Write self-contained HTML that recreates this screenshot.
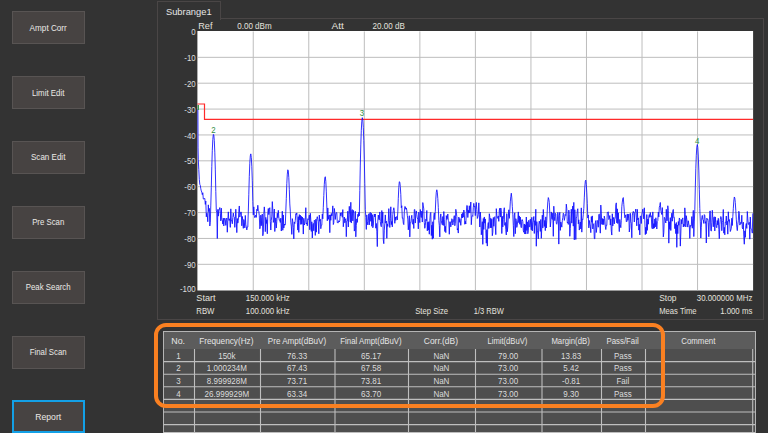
<!DOCTYPE html>
<html><head><meta charset="utf-8"><style>
html,body{margin:0;padding:0;}
body{width:768px;height:433px;overflow:hidden;background:#333333;position:relative;font-family:"Liberation Sans",sans-serif;}
.btn{position:absolute;left:12px;width:71px;height:31px;border:1px solid #585453;background:#474342;}
.btn.sel{border:2px solid #13a0e6;width:69px;height:29px;}
svg{position:absolute;left:0;top:0;}
text{font-family:"Liberation Sans",sans-serif;}
</style></head><body>
<div class="btn" style="top:11px"></div><div class="btn" style="top:76px"></div><div class="btn" style="top:141px"></div><div class="btn" style="top:206px"></div><div class="btn" style="top:271px"></div><div class="btn" style="top:336px"></div><div class="btn sel" style="top:400px"></div>
<div style="position:absolute;left:157px;top:18px;width:605px;height:300px;border:1px solid #4a4646;"></div>
<div style="position:absolute;left:157px;top:1px;width:62px;height:18px;border:1px solid #4a4646;border-bottom:none;background:#333333;"></div>
<div style="position:absolute;left:163px;top:331px;width:591px;height:120px;border:1px solid #b4b4b4;background:#4e4e4e;"></div>
<div style="position:absolute;left:164px;top:332px;width:591px;height:17px;background:#5c5c5c;"></div>
<svg width="768" height="433">
<rect x="197.4" y="31" width="555.7" height="259.5" fill="#ffffff"/>
<g stroke="#bdbdbd" stroke-width="1.0"><line x1="253.24" y1="31.45" x2="253.24" y2="290.2"/><line x1="308.78" y1="31.45" x2="308.78" y2="290.2"/><line x1="364.32" y1="31.45" x2="364.32" y2="290.2"/><line x1="419.86" y1="31.45" x2="419.86" y2="290.2"/><line x1="475.40" y1="31.45" x2="475.40" y2="290.2"/><line x1="530.94" y1="31.45" x2="530.94" y2="290.2"/><line x1="586.48" y1="31.45" x2="586.48" y2="290.2"/><line x1="642.02" y1="31.45" x2="642.02" y2="290.2"/><line x1="697.56" y1="31.45" x2="697.56" y2="290.2"/><line x1="197.7" y1="57.33" x2="753.0999999999999" y2="57.33"/><line x1="197.7" y1="83.20" x2="753.0999999999999" y2="83.20"/><line x1="197.7" y1="109.08" x2="753.0999999999999" y2="109.08"/><line x1="197.7" y1="134.95" x2="753.0999999999999" y2="134.95"/><line x1="197.7" y1="160.82" x2="753.0999999999999" y2="160.82"/><line x1="197.7" y1="186.70" x2="753.0999999999999" y2="186.70"/><line x1="197.7" y1="212.57" x2="753.0999999999999" y2="212.57"/><line x1="197.7" y1="238.45" x2="753.0999999999999" y2="238.45"/><line x1="197.7" y1="264.32" x2="753.0999999999999" y2="264.32"/></g>
<polyline fill="none" stroke="#ff2a2a" stroke-width="1.2" points="197.4,104 204.5,104 204.5,119.4 753.1,119.4"/>
<polyline fill="none" stroke="#0c0cff" stroke-width="0.85" stroke-linejoin="round" points="197.90,109.08 198.05,147.89 198.30,159.84 198.80,169.70 199.30,179.37 199.80,184.34 200.30,185.32 200.80,188.79 201.30,190.92 201.80,192.14 202.30,194.66 202.80,192.78 203.30,199.00 203.80,199.12 204.30,198.55 204.80,198.45 205.30,204.40 205.80,201.08 206.30,216.81 206.80,213.14 207.30,215.43 207.80,221.74 208.30,204.85 208.80,211.52 209.30,208.39 209.80,226.01 210.30,222.36 210.80,205.12 211.30,187.33 211.80,166.50 212.30,150.26 212.80,139.60 213.30,134.42 213.80,134.81 214.30,140.76 214.80,152.22 215.30,169.14 215.80,191.55 216.30,211.03 216.80,212.29 217.30,238.51 217.80,209.42 218.30,216.14 218.80,209.54 219.30,209.55 219.80,207.57 220.30,213.28 220.80,220.92 221.30,208.15 221.80,219.33 222.30,220.24 222.80,224.08 223.30,218.13 223.80,225.95 224.30,220.00 224.80,218.07 225.30,219.93 225.80,225.39 226.30,219.19 226.80,218.10 227.30,232.24 227.80,220.59 228.30,211.86 228.80,220.34 229.30,220.33 229.80,218.73 230.30,227.38 230.80,208.85 231.30,220.99 231.80,220.60 232.30,223.78 232.80,217.43 233.30,213.10 233.80,216.71 234.30,217.20 234.80,227.36 235.30,218.84 235.80,209.24 236.30,220.89 236.80,232.61 237.30,218.51 237.80,223.11 238.30,220.69 238.80,211.40 239.30,205.97 239.80,217.11 240.30,214.14 240.80,212.02 241.30,212.11 241.80,225.80 242.30,216.42 242.80,220.33 243.30,228.34 243.80,219.53 244.30,222.15 244.80,227.92 245.30,215.44 245.80,224.80 246.30,226.81 246.80,229.95 247.30,227.03 247.80,226.99 248.30,211.92 248.80,194.28 249.30,176.34 249.80,163.25 250.30,155.85 250.80,153.87 251.30,157.45 251.80,166.33 252.30,180.85 252.80,201.35 253.30,214.84 253.80,206.87 254.30,215.46 254.80,217.70 255.30,216.88 255.80,215.06 256.30,217.37 256.80,209.32 257.30,210.82 257.80,205.27 258.30,210.27 258.80,211.50 259.30,215.75 259.80,228.81 260.30,226.69 260.80,215.12 261.30,225.69 261.80,217.35 262.30,214.09 262.80,235.77 263.30,232.83 263.80,214.24 264.30,206.89 264.80,213.40 265.30,231.66 265.80,217.38 266.30,223.52 266.80,219.71 267.30,233.78 267.80,212.77 268.30,208.48 268.80,214.61 269.30,209.57 269.80,207.70 270.30,221.52 270.80,230.03 271.30,220.28 271.80,216.11 272.30,201.62 272.80,209.99 273.30,222.42 273.80,219.88 274.30,209.07 274.80,231.51 275.30,223.15 275.80,217.87 276.30,228.04 276.80,221.31 277.30,213.20 277.80,217.71 278.30,210.32 278.80,216.98 279.30,220.28 279.80,219.88 280.30,222.48 280.80,218.17 281.30,231.03 281.80,222.87 282.30,211.21 282.80,230.28 283.30,214.94 283.80,228.06 284.30,224.00 284.80,225.13 285.30,224.89 285.80,211.25 286.30,198.50 286.80,183.69 287.30,174.13 287.80,169.79 288.30,170.98 288.80,177.65 289.30,189.31 289.80,203.93 290.30,211.15 290.80,222.14 291.30,226.12 291.80,234.38 292.30,218.64 292.80,221.61 293.30,227.40 293.80,238.88 294.30,222.13 294.80,223.60 295.30,220.37 295.80,213.70 296.30,214.57 296.80,212.95 297.30,222.27 297.80,230.10 298.30,216.63 298.80,232.42 299.30,214.59 299.80,219.86 300.30,215.15 300.80,224.43 301.30,216.28 301.80,224.20 302.30,216.99 302.80,220.16 303.30,234.05 303.80,218.32 304.30,225.01 304.80,223.41 305.30,219.23 305.80,207.69 306.30,223.97 306.80,222.93 307.30,225.75 307.80,218.74 308.30,219.55 308.80,218.92 309.30,215.12 309.80,229.76 310.30,213.27 310.80,219.88 311.30,231.40 311.80,221.79 312.30,237.98 312.80,224.77 313.30,223.41 313.80,230.78 314.30,220.24 314.80,221.29 315.30,235.40 315.80,219.29 316.30,232.16 316.80,218.60 317.30,216.69 317.80,219.46 318.30,221.68 318.80,233.79 319.30,215.06 319.80,221.22 320.30,219.27 320.80,228.73 321.30,225.17 321.80,225.16 322.30,214.12 322.80,218.85 323.30,207.25 323.80,195.44 324.30,184.26 324.80,177.98 325.30,176.74 325.80,181.38 326.30,191.15 326.80,204.97 327.30,220.81 327.80,207.94 328.30,219.35 328.80,215.91 329.30,214.95 329.80,232.68 330.30,214.90 330.80,220.31 331.30,213.41 331.80,215.98 332.30,213.70 332.80,205.87 333.30,224.55 333.80,222.71 334.30,208.44 334.80,212.38 335.30,219.46 335.80,213.89 336.30,212.66 336.80,212.56 337.30,222.83 337.80,222.54 338.30,222.77 338.80,220.63 339.30,221.94 339.80,220.45 340.30,212.79 340.80,215.84 341.30,213.31 341.80,212.54 342.30,217.25 342.80,209.60 343.30,226.78 343.80,220.98 344.30,217.01 344.80,222.80 345.30,220.39 345.80,218.63 346.30,236.70 346.80,221.06 347.30,220.99 347.80,211.18 348.30,226.99 348.80,215.20 349.30,206.33 349.80,214.70 350.30,221.93 350.80,202.27 351.30,223.04 351.80,210.92 352.30,209.60 352.80,220.89 353.30,210.33 353.80,213.28 354.30,231.10 354.80,228.91 355.30,211.32 355.80,236.83 356.30,225.35 356.80,218.86 357.30,222.40 357.80,214.34 358.30,216.66 358.80,212.25 359.30,215.92 359.80,190.45 360.30,165.04 360.80,144.89 361.30,130.26 361.80,121.18 362.30,117.66 362.80,119.70 363.30,127.31 363.80,140.46 364.30,159.13 364.80,183.27 365.30,209.24 365.80,217.46 366.30,229.43 366.80,214.90 367.30,221.47 367.80,224.92 368.30,220.58 368.80,213.78 369.30,224.85 369.80,213.22 370.30,212.36 370.80,221.34 371.30,213.17 371.80,226.29 372.30,214.70 372.80,227.80 373.30,225.57 373.80,217.14 374.30,214.01 374.80,216.91 375.30,213.98 375.80,228.19 376.30,223.46 376.80,231.18 377.30,246.59 377.80,221.20 378.30,215.02 378.80,219.23 379.30,219.85 379.80,211.98 380.30,221.53 380.80,225.24 381.30,226.74 381.80,210.53 382.30,223.19 382.80,212.10 383.30,239.97 383.80,243.68 384.30,230.20 384.80,223.24 385.30,214.90 385.80,223.14 386.30,221.02 386.80,238.33 387.30,223.87 387.80,226.44 388.30,221.01 388.80,208.64 389.30,220.56 389.80,227.47 390.30,218.37 390.80,206.80 391.30,224.62 391.80,221.39 392.30,226.87 392.80,214.53 393.30,210.36 393.80,207.76 394.30,210.43 394.80,223.32 395.30,216.95 395.80,220.35 396.30,216.79 396.80,216.68 397.30,219.87 397.80,211.88 398.30,198.34 398.80,187.28 399.30,181.67 399.80,182.14 400.30,186.41 400.80,194.61 401.30,207.75 401.80,205.75 402.30,218.28 402.80,217.79 403.30,223.22 403.80,224.60 404.30,212.18 404.80,206.50 405.30,206.71 405.80,209.23 406.30,207.93 406.80,210.35 407.30,215.35 407.80,219.06 408.30,229.83 408.80,223.95 409.30,215.73 409.80,236.91 410.30,222.54 410.80,222.49 411.30,218.28 411.80,215.25 412.30,223.22 412.80,224.31 413.30,219.26 413.80,228.48 414.30,209.70 414.80,209.44 415.30,223.06 415.80,213.80 416.30,210.93 416.80,214.68 417.30,217.99 417.80,219.18 418.30,228.89 418.80,212.12 419.30,219.89 419.80,222.64 420.30,209.51 420.80,215.46 421.30,217.50 421.80,211.08 422.30,222.04 422.80,202.57 423.30,205.96 423.80,208.90 424.30,222.55 424.80,228.29 425.30,225.52 425.80,219.24 426.30,220.69 426.80,210.49 427.30,230.84 427.80,222.21 428.30,230.07 428.80,221.71 429.30,234.21 429.80,220.61 430.30,213.65 430.80,212.40 431.30,235.57 431.80,225.22 432.30,239.18 432.80,221.73 433.30,238.30 433.80,215.93 434.30,212.96 434.80,219.58 435.30,211.35 435.80,199.18 436.30,192.19 436.80,189.78 437.30,192.09 437.80,198.59 438.30,207.42 438.80,220.47 439.30,225.59 439.80,236.89 440.30,217.97 440.80,213.93 441.30,220.90 441.80,223.46 442.30,224.79 442.80,216.53 443.30,225.48 443.80,211.54 444.30,219.84 444.80,231.50 445.30,226.37 445.80,232.62 446.30,215.60 446.80,219.47 447.30,218.81 447.80,214.05 448.30,220.62 448.80,221.04 449.30,234.28 449.80,222.14 450.30,221.79 450.80,226.86 451.30,223.40 451.80,218.72 452.30,219.58 452.80,225.02 453.30,222.67 453.80,218.44 454.30,215.65 454.80,225.77 455.30,223.37 455.80,209.30 456.30,212.15 456.80,216.55 457.30,230.00 457.80,228.52 458.30,233.07 458.80,217.06 459.30,222.33 459.80,218.53 460.30,220.98 460.80,225.33 461.30,218.59 461.80,213.91 462.30,218.04 462.80,212.63 463.30,217.23 463.80,210.00 464.30,212.50 464.80,224.28 465.30,221.31 465.80,224.00 466.30,212.59 466.80,205.45 467.30,205.69 467.80,217.51 468.30,210.21 468.80,213.14 469.30,205.76 469.80,212.94 470.30,209.92 470.80,202.03 471.30,224.71 471.80,216.71 472.30,215.62 472.80,216.42 473.30,207.51 473.80,203.34 474.30,207.09 474.80,206.40 475.30,215.61 475.80,207.01 476.30,202.45 476.80,209.64 477.30,218.47 477.80,217.04 478.30,214.30 478.80,202.87 479.30,214.34 479.80,227.03 480.30,212.01 480.80,219.06 481.30,234.79 481.80,229.58 482.30,221.68 482.80,244.34 483.30,218.47 483.80,229.45 484.30,216.96 484.80,223.15 485.30,218.93 485.80,230.68 486.30,243.18 486.80,229.67 487.30,246.08 487.80,225.42 488.30,222.52 488.80,228.58 489.30,213.73 489.80,216.96 490.30,227.86 490.80,218.21 491.30,227.80 491.80,219.21 492.30,235.71 492.80,232.42 493.30,217.49 493.80,226.26 494.30,217.46 494.80,216.63 495.30,225.98 495.80,234.66 496.30,208.65 496.80,215.21 497.30,218.30 497.80,217.84 498.30,215.95 498.80,221.37 499.30,210.18 499.80,208.21 500.30,217.09 500.80,207.99 501.30,210.75 501.80,233.52 502.30,216.28 502.80,226.93 503.30,219.71 503.80,211.29 504.30,207.75 504.80,225.33 505.30,222.48 505.80,229.64 506.30,234.94 506.80,213.60 507.30,231.77 507.80,226.95 508.30,217.15 508.80,209.81 509.30,218.38 509.80,211.27 510.30,201.89 510.80,196.64 511.30,193.20 511.80,197.90 512.30,206.43 512.80,214.22 513.30,225.44 513.80,236.57 514.30,215.07 514.80,212.73 515.30,233.71 515.80,218.64 516.30,220.38 516.80,227.42 517.30,224.96 517.80,219.94 518.30,211.92 518.80,222.65 519.30,215.91 519.80,224.29 520.30,217.07 520.80,225.89 521.30,227.73 521.80,219.83 522.30,219.63 522.80,221.56 523.30,230.52 523.80,232.29 524.30,223.98 524.80,234.02 525.30,224.75 525.80,234.04 526.30,217.00 526.80,230.50 527.30,221.82 527.80,233.77 528.30,230.86 528.80,220.26 529.30,226.57 529.80,226.99 530.30,219.18 530.80,225.02 531.30,229.82 531.80,217.33 532.30,230.97 532.80,222.57 533.30,220.71 533.80,216.51 534.30,233.48 534.80,220.68 535.30,225.39 535.80,209.25 536.30,246.24 536.80,221.61 537.30,230.12 537.80,233.01 538.30,238.75 538.80,224.04 539.30,221.11 539.80,224.08 540.30,231.42 540.80,219.51 541.30,238.36 541.80,227.77 542.30,215.16 542.80,228.06 543.30,209.48 543.80,217.60 544.30,226.46 544.80,220.46 545.30,230.63 545.80,216.88 546.30,228.00 546.80,220.42 547.30,209.94 547.80,201.84 548.30,197.58 548.80,199.09 549.30,202.71 549.80,213.87 550.30,227.00 550.80,221.77 551.30,211.93 551.80,218.61 552.30,219.44 552.80,213.10 553.30,236.32 553.80,206.21 554.30,216.38 554.80,220.66 555.30,213.26 555.80,214.25 556.30,223.27 556.80,224.24 557.30,221.63 557.80,212.40 558.30,216.92 558.80,244.10 559.30,215.64 559.80,212.33 560.30,230.40 560.80,222.00 561.30,224.13 561.80,227.16 562.30,220.79 562.80,217.55 563.30,213.21 563.80,214.34 564.30,220.42 564.80,217.78 565.30,214.57 565.80,215.44 566.30,204.15 566.80,208.80 567.30,222.93 567.80,222.20 568.30,224.43 568.80,210.13 569.30,214.67 569.80,236.28 570.30,228.34 570.80,220.20 571.30,209.23 571.80,223.12 572.30,211.87 572.80,205.98 573.30,226.13 573.80,202.38 574.30,239.83 574.80,209.71 575.30,219.08 575.80,239.51 576.30,218.13 576.80,216.24 577.30,210.53 577.80,208.74 578.30,223.83 578.80,219.80 579.30,230.07 579.80,225.34 580.30,221.98 580.80,228.96 581.30,207.87 581.80,232.15 582.30,218.92 582.80,219.48 583.30,214.32 583.80,208.54 584.30,197.85 584.80,187.06 585.30,181.29 585.80,180.16 586.30,184.48 586.80,192.90 587.30,203.26 587.80,218.06 588.30,214.93 588.80,227.90 589.30,220.45 589.80,224.03 590.30,226.21 590.80,232.67 591.30,216.65 591.80,222.21 592.30,215.88 592.80,228.95 593.30,224.23 593.80,223.66 594.30,238.50 594.80,238.94 595.30,222.96 595.80,220.57 596.30,232.50 596.80,227.71 597.30,220.41 597.80,221.33 598.30,227.23 598.80,214.46 599.30,214.03 599.80,221.86 600.30,233.15 600.80,205.07 601.30,213.12 601.80,224.34 602.30,218.44 602.80,224.65 603.30,219.07 603.80,224.61 604.30,216.13 604.80,218.61 605.30,226.14 605.80,229.54 606.30,225.05 606.80,225.41 607.30,212.42 607.80,212.45 608.30,211.80 608.80,219.52 609.30,218.54 609.80,215.53 610.30,225.07 610.80,218.89 611.30,231.16 611.80,235.06 612.30,213.81 612.80,225.93 613.30,219.40 613.80,217.31 614.30,223.86 614.80,219.06 615.30,217.89 615.80,204.96 616.30,202.86 616.80,222.88 617.30,208.84 617.80,223.57 618.30,212.82 618.80,223.83 619.30,231.60 619.80,219.45 620.30,224.61 620.80,227.70 621.30,220.38 621.80,206.73 622.30,202.12 622.80,198.44 623.30,197.58 623.80,204.50 624.30,211.45 624.80,217.74 625.30,216.84 625.80,214.84 626.30,221.51 626.80,222.00 627.30,213.94 627.80,220.36 628.30,218.40 628.80,214.08 629.30,231.94 629.80,227.81 630.30,213.25 630.80,221.78 631.30,223.31 631.80,237.78 632.30,215.05 632.80,212.81 633.30,211.40 633.80,213.36 634.30,221.98 634.80,212.41 635.30,211.81 635.80,209.04 636.30,217.85 636.80,225.86 637.30,209.33 637.80,219.91 638.30,217.92 638.80,230.15 639.30,224.35 639.80,234.90 640.30,216.19 640.80,216.05 641.30,223.54 641.80,214.79 642.30,212.00 642.80,209.18 643.30,213.76 643.80,218.93 644.30,207.80 644.80,220.80 645.30,234.61 645.80,227.27 646.30,233.70 646.80,214.56 647.30,230.36 647.80,219.07 648.30,224.21 648.80,216.28 649.30,214.50 649.80,217.41 650.30,212.45 650.80,216.67 651.30,215.75 651.80,227.48 652.30,228.79 652.80,211.92 653.30,228.59 653.80,223.63 654.30,228.14 654.80,218.94 655.30,226.91 655.80,217.77 656.30,220.53 656.80,229.01 657.30,221.53 657.80,220.55 658.30,212.11 658.80,216.90 659.30,207.19 659.80,205.44 660.30,202.47 660.80,210.23 661.30,212.69 661.80,214.56 662.30,207.59 662.80,217.05 663.30,236.89 663.80,232.66 664.30,217.32 664.80,217.92 665.30,220.33 665.80,223.01 666.30,209.32 666.80,220.93 667.30,220.38 667.80,205.75 668.30,210.42 668.80,243.15 669.30,221.78 669.80,229.30 670.30,217.65 670.80,230.53 671.30,218.65 671.80,213.17 672.30,221.19 672.80,211.00 673.30,209.45 673.80,217.86 674.30,217.42 674.80,228.64 675.30,223.87 675.80,233.65 676.30,222.51 676.80,247.33 677.30,224.94 677.80,233.64 678.30,221.52 678.80,225.24 679.30,217.98 679.80,219.04 680.30,246.11 680.80,233.99 681.30,219.52 681.80,223.88 682.30,219.54 682.80,217.88 683.30,226.96 683.80,224.04 684.30,226.39 684.80,207.85 685.30,214.48 685.80,227.00 686.30,215.73 686.80,219.65 687.30,223.68 687.80,227.08 688.30,220.76 688.80,224.11 689.30,225.68 689.80,238.37 690.30,225.31 690.80,226.42 691.30,225.88 691.80,216.59 692.30,228.23 692.80,218.70 693.30,210.36 693.80,236.57 694.30,221.95 694.80,209.83 695.30,187.90 695.80,168.82 696.30,155.22 696.80,147.09 697.30,144.50 697.80,147.48 698.30,156.06 698.80,170.06 699.30,189.17 699.80,208.28 700.30,221.22 700.80,238.06 701.30,227.23 701.80,217.50 702.30,215.41 702.80,219.61 703.30,220.01 703.80,223.44 704.30,214.61 704.80,215.52 705.30,223.30 705.80,221.63 706.30,243.00 706.80,218.19 707.30,219.36 707.80,219.15 708.30,222.41 708.80,236.75 709.30,222.95 709.80,211.05 710.30,210.97 710.80,230.10 711.30,231.14 711.80,222.18 712.30,210.26 712.80,217.77 713.30,226.79 713.80,217.31 714.30,216.87 714.80,230.96 715.30,216.93 715.80,222.51 716.30,227.13 716.80,227.75 717.30,220.55 717.80,224.90 718.30,218.31 718.80,229.36 719.30,238.69 719.80,224.56 720.30,219.39 720.80,216.51 721.30,217.56 721.80,230.72 722.30,222.56 722.80,220.84 723.30,209.49 723.80,233.18 724.30,227.35 724.80,234.82 725.30,222.06 725.80,222.50 726.30,216.02 726.80,224.89 727.30,221.28 727.80,234.13 728.30,211.77 728.80,221.22 729.30,219.53 729.80,223.93 730.30,231.51 730.80,230.06 731.30,228.24 731.80,218.22 732.30,225.50 732.80,216.63 733.30,208.73 733.80,201.09 734.30,196.98 734.80,197.95 735.30,202.61 735.80,210.70 736.30,219.18 736.80,227.25 737.30,230.62 737.80,224.36 738.30,220.76 738.80,211.26 739.30,213.30 739.80,225.09 740.30,223.92 740.80,222.34 741.30,223.44 741.80,215.23 742.30,227.85 742.80,228.91 743.30,222.17 743.80,236.91 744.30,244.21 744.80,230.87 745.30,237.35 745.80,225.82 746.30,223.49 746.80,228.41 747.30,211.50 747.80,218.95 748.30,224.46 748.80,224.20 749.30,222.33 749.80,239.13 750.30,217.06 750.80,228.57 751.30,228.75 751.80,229.74 752.30,233.12 752.80,213.38"/>
<g stroke="#bebebe" stroke-width="1.1"><line x1="163.5" y1="361.60" x2="755" y2="361.60"/><line x1="163.5" y1="374.20" x2="755" y2="374.20"/><line x1="163.5" y1="386.80" x2="755" y2="386.80"/><line x1="163.5" y1="399.40" x2="755" y2="399.40"/><line x1="163.5" y1="412.00" x2="755" y2="412.00"/><line x1="163.5" y1="424.60" x2="755" y2="424.60"/><line x1="163.5" y1="437.20" x2="755" y2="437.20"/><line x1="194.50" y1="349.0" x2="194.50" y2="433"/><line x1="260.50" y1="349.0" x2="260.50" y2="433"/><line x1="335.00" y1="349.0" x2="335.00" y2="433"/><line x1="408.50" y1="349.0" x2="408.50" y2="433"/><line x1="475.50" y1="349.0" x2="475.50" y2="433"/><line x1="542.00" y1="349.0" x2="542.00" y2="433"/><line x1="601.50" y1="349.0" x2="601.50" y2="433"/><line x1="645.50" y1="349.0" x2="645.50" y2="433"/><line x1="752.7" y1="349" x2="752.7" y2="433"/><line x1="163.5" y1="432.6" x2="755" y2="432.6"/></g>
<text x="165.95" y="15.00" font-size="9.9" text-anchor="start" textLength="45.70" lengthAdjust="spacingAndGlyphs" fill="#e6e6e6">Subrange1</text>
<text x="195.75" y="35.10" font-size="9.0" text-anchor="end" textLength="4.40" lengthAdjust="spacingAndGlyphs" fill="#dedede">0</text>
<text x="195.75" y="60.95" font-size="9.0" text-anchor="end" textLength="11.45" lengthAdjust="spacingAndGlyphs" fill="#dedede">-10</text>
<text x="195.75" y="86.80" font-size="9.0" text-anchor="end" textLength="11.45" lengthAdjust="spacingAndGlyphs" fill="#dedede">-20</text>
<text x="195.75" y="112.65" font-size="9.0" text-anchor="end" textLength="11.45" lengthAdjust="spacingAndGlyphs" fill="#dedede">-30</text>
<text x="195.75" y="138.50" font-size="9.0" text-anchor="end" textLength="11.45" lengthAdjust="spacingAndGlyphs" fill="#dedede">-40</text>
<text x="195.75" y="164.35" font-size="9.0" text-anchor="end" textLength="11.45" lengthAdjust="spacingAndGlyphs" fill="#dedede">-50</text>
<text x="195.75" y="190.20" font-size="9.0" text-anchor="end" textLength="11.45" lengthAdjust="spacingAndGlyphs" fill="#dedede">-60</text>
<text x="195.75" y="216.05" font-size="9.0" text-anchor="end" textLength="11.45" lengthAdjust="spacingAndGlyphs" fill="#dedede">-70</text>
<text x="195.75" y="241.90" font-size="9.0" text-anchor="end" textLength="11.45" lengthAdjust="spacingAndGlyphs" fill="#dedede">-80</text>
<text x="195.75" y="267.75" font-size="9.0" text-anchor="end" textLength="11.45" lengthAdjust="spacingAndGlyphs" fill="#dedede">-90</text>
<text x="195.75" y="292.20" font-size="9.0" text-anchor="end" textLength="15.85" lengthAdjust="spacingAndGlyphs" fill="#dedede">-100</text>
<text x="198.25" y="28.80" font-size="8.2" text-anchor="start" textLength="14.20" lengthAdjust="spacingAndGlyphs" fill="#e4e2de">Ref</text>
<text x="237.25" y="28.80" font-size="8.2" text-anchor="start" textLength="34.40" lengthAdjust="spacingAndGlyphs" fill="#e4e2de">0.00 dBm</text>
<text x="331.55" y="28.80" font-size="8.2" text-anchor="start" textLength="12.30" lengthAdjust="spacingAndGlyphs" fill="#e4e2de">Att</text>
<text x="372.55" y="28.80" font-size="8.2" text-anchor="start" textLength="32.20" lengthAdjust="spacingAndGlyphs" fill="#e4e2de">20.00 dB</text>
<text x="196.35" y="300.60" font-size="8.6" text-anchor="start" textLength="19.20" lengthAdjust="spacingAndGlyphs" fill="#e4e2de">Start</text>
<text x="245.85" y="300.60" font-size="8.6" text-anchor="start" textLength="43.90" lengthAdjust="spacingAndGlyphs" fill="#e4e2de">150.000 kHz</text>
<text x="196.35" y="313.80" font-size="8.6" text-anchor="start" textLength="18.10" lengthAdjust="spacingAndGlyphs" fill="#e4e2de">RBW</text>
<text x="245.85" y="313.80" font-size="8.6" text-anchor="start" textLength="43.90" lengthAdjust="spacingAndGlyphs" fill="#e4e2de">100.000 kHz</text>
<text x="415.15" y="313.80" font-size="8.6" text-anchor="start" textLength="33.00" lengthAdjust="spacingAndGlyphs" fill="#e4e2de">Step Size</text>
<text x="473.75" y="313.80" font-size="8.6" text-anchor="start" textLength="30.10" lengthAdjust="spacingAndGlyphs" fill="#e4e2de">1/3 RBW</text>
<text x="659.25" y="300.60" font-size="8.6" text-anchor="start" textLength="17.30" lengthAdjust="spacingAndGlyphs" fill="#e4e2de">Stop</text>
<text x="752.35" y="300.60" font-size="8.6" text-anchor="end" textLength="55.60" lengthAdjust="spacingAndGlyphs" fill="#e4e2de">30.000000 MHz</text>
<text x="659.25" y="313.80" font-size="8.6" text-anchor="start" textLength="37.30" lengthAdjust="spacingAndGlyphs" fill="#e4e2de">Meas Time</text>
<text x="752.35" y="313.80" font-size="8.6" text-anchor="end" textLength="32.20" lengthAdjust="spacingAndGlyphs" fill="#e4e2de">1.000 ms</text>
<text x="213.40" y="132.80" font-size="9" text-anchor="middle" fill="#2f8f45" textLength="4.40" lengthAdjust="spacingAndGlyphs">2</text>
<rect x="197.6" y="105" width="1.4" height="5" fill="#3c9a50"/>
<text x="362.00" y="115.70" font-size="9" text-anchor="middle" fill="#2f8f45" textLength="4.40" lengthAdjust="spacingAndGlyphs">3</text>
<text x="697.30" y="143.70" font-size="9" text-anchor="middle" fill="#2f8f45" textLength="4.40" lengthAdjust="spacingAndGlyphs">4</text>
<text x="48.20" y="30.60" font-size="9.0" text-anchor="middle" textLength="37.20" lengthAdjust="spacingAndGlyphs" fill="#ebe9e6">Ampt Corr</text>
<text x="48.20" y="95.70" font-size="9.0" text-anchor="middle" textLength="32.50" lengthAdjust="spacingAndGlyphs" fill="#ebe9e6">Limit Edit</text>
<text x="48.20" y="159.80" font-size="9.0" text-anchor="middle" textLength="34.40" lengthAdjust="spacingAndGlyphs" fill="#ebe9e6">Scan Edit</text>
<text x="48.20" y="225.20" font-size="9.0" text-anchor="middle" textLength="32.10" lengthAdjust="spacingAndGlyphs" fill="#ebe9e6">Pre Scan</text>
<text x="48.20" y="289.80" font-size="9.0" text-anchor="middle" textLength="44.80" lengthAdjust="spacingAndGlyphs" fill="#ebe9e6">Peak Search</text>
<text x="48.20" y="355.30" font-size="9.0" text-anchor="middle" textLength="36.90" lengthAdjust="spacingAndGlyphs" fill="#ebe9e6">Final Scan</text>
<text x="48.20" y="419.70" font-size="9.0" text-anchor="middle" textLength="25.90" lengthAdjust="spacingAndGlyphs" fill="#ebe9e6">Report</text>
<text x="178.20" y="343.60" font-size="8.8" text-anchor="middle" textLength="13.80" lengthAdjust="spacingAndGlyphs" fill="#e6e6e6">No.</text>
<text x="226.30" y="343.60" font-size="8.8" text-anchor="middle" textLength="54.30" lengthAdjust="spacingAndGlyphs" fill="#e6e6e6">Frequency(Hz)</text>
<text x="297.00" y="343.60" font-size="8.8" text-anchor="middle" textLength="58.30" lengthAdjust="spacingAndGlyphs" fill="#e6e6e6">Pre Ampt(dBuV)</text>
<text x="371.00" y="343.60" font-size="8.8" text-anchor="middle" textLength="61.30" lengthAdjust="spacingAndGlyphs" fill="#e6e6e6">Final Ampt(dBuV)</text>
<text x="440.90" y="343.60" font-size="8.8" text-anchor="middle" textLength="34.20" lengthAdjust="spacingAndGlyphs" fill="#e6e6e6">Corr.(dB)</text>
<text x="507.40" y="343.60" font-size="8.8" text-anchor="middle" textLength="39.90" lengthAdjust="spacingAndGlyphs" fill="#e6e6e6">Limit(dBuV)</text>
<text x="570.60" y="343.60" font-size="8.8" text-anchor="middle" textLength="38.40" lengthAdjust="spacingAndGlyphs" fill="#e6e6e6">Margin(dB)</text>
<text x="622.60" y="343.60" font-size="8.8" text-anchor="middle" textLength="32.20" lengthAdjust="spacingAndGlyphs" fill="#e6e6e6">Pass/Fail</text>
<text x="698.30" y="343.60" font-size="8.8" text-anchor="middle" textLength="34.10" lengthAdjust="spacingAndGlyphs" fill="#e6e6e6">Comment</text>
<text x="178.40" y="358.80" font-size="8.4" text-anchor="middle" textLength="4.46" lengthAdjust="spacingAndGlyphs" fill="#dcdcdc">1</text>
<text x="226.90" y="358.80" font-size="8.4" text-anchor="middle" textLength="17.40" lengthAdjust="spacingAndGlyphs" fill="#dcdcdc">150k</text>
<text x="297.15" y="358.80" font-size="8.4" text-anchor="middle" textLength="20.08" lengthAdjust="spacingAndGlyphs" fill="#dcdcdc">76.33</text>
<text x="371.15" y="358.80" font-size="8.4" text-anchor="middle" textLength="20.08" lengthAdjust="spacingAndGlyphs" fill="#dcdcdc">65.17</text>
<text x="441.40" y="358.80" font-size="8.4" text-anchor="middle" textLength="16.05" lengthAdjust="spacingAndGlyphs" fill="#dcdcdc">NaN</text>
<text x="508.15" y="358.80" font-size="8.4" text-anchor="middle" textLength="20.08" lengthAdjust="spacingAndGlyphs" fill="#dcdcdc">79.00</text>
<text x="571.15" y="358.80" font-size="8.4" text-anchor="middle" textLength="20.08" lengthAdjust="spacingAndGlyphs" fill="#dcdcdc">13.83</text>
<text x="622.90" y="358.80" font-size="8.4" text-anchor="middle" textLength="17.83" lengthAdjust="spacingAndGlyphs" fill="#dcdcdc">Pass</text>
<text x="178.40" y="371.40" font-size="8.4" text-anchor="middle" textLength="4.46" lengthAdjust="spacingAndGlyphs" fill="#dcdcdc">2</text>
<text x="226.90" y="371.40" font-size="8.4" text-anchor="middle" textLength="40.14" lengthAdjust="spacingAndGlyphs" fill="#dcdcdc">1.000234M</text>
<text x="297.15" y="371.40" font-size="8.4" text-anchor="middle" textLength="20.08" lengthAdjust="spacingAndGlyphs" fill="#dcdcdc">67.43</text>
<text x="371.15" y="371.40" font-size="8.4" text-anchor="middle" textLength="20.08" lengthAdjust="spacingAndGlyphs" fill="#dcdcdc">67.58</text>
<text x="441.40" y="371.40" font-size="8.4" text-anchor="middle" textLength="16.05" lengthAdjust="spacingAndGlyphs" fill="#dcdcdc">NaN</text>
<text x="508.15" y="371.40" font-size="8.4" text-anchor="middle" textLength="20.08" lengthAdjust="spacingAndGlyphs" fill="#dcdcdc">73.00</text>
<text x="571.15" y="371.40" font-size="8.4" text-anchor="middle" textLength="15.61" lengthAdjust="spacingAndGlyphs" fill="#dcdcdc">5.42</text>
<text x="622.90" y="371.40" font-size="8.4" text-anchor="middle" textLength="17.83" lengthAdjust="spacingAndGlyphs" fill="#dcdcdc">Pass</text>
<text x="178.40" y="384.00" font-size="8.4" text-anchor="middle" textLength="4.46" lengthAdjust="spacingAndGlyphs" fill="#dcdcdc">3</text>
<text x="226.90" y="384.00" font-size="8.4" text-anchor="middle" textLength="40.14" lengthAdjust="spacingAndGlyphs" fill="#dcdcdc">8.999928M</text>
<text x="297.15" y="384.00" font-size="8.4" text-anchor="middle" textLength="20.08" lengthAdjust="spacingAndGlyphs" fill="#dcdcdc">73.71</text>
<text x="371.15" y="384.00" font-size="8.4" text-anchor="middle" textLength="20.08" lengthAdjust="spacingAndGlyphs" fill="#dcdcdc">73.81</text>
<text x="441.40" y="384.00" font-size="8.4" text-anchor="middle" textLength="16.05" lengthAdjust="spacingAndGlyphs" fill="#dcdcdc">NaN</text>
<text x="508.15" y="384.00" font-size="8.4" text-anchor="middle" textLength="20.08" lengthAdjust="spacingAndGlyphs" fill="#dcdcdc">73.00</text>
<text x="571.15" y="384.00" font-size="8.4" text-anchor="middle" textLength="18.29" lengthAdjust="spacingAndGlyphs" fill="#dcdcdc">-0.81</text>
<text x="622.90" y="384.00" font-size="8.4" text-anchor="middle" textLength="12.93" lengthAdjust="spacingAndGlyphs" fill="#dcdcdc">Fail</text>
<text x="178.40" y="396.60" font-size="8.4" text-anchor="middle" textLength="4.46" lengthAdjust="spacingAndGlyphs" fill="#dcdcdc">4</text>
<text x="226.90" y="396.60" font-size="8.4" text-anchor="middle" textLength="44.60" lengthAdjust="spacingAndGlyphs" fill="#dcdcdc">26.999929M</text>
<text x="297.15" y="396.60" font-size="8.4" text-anchor="middle" textLength="20.08" lengthAdjust="spacingAndGlyphs" fill="#dcdcdc">63.34</text>
<text x="371.15" y="396.60" font-size="8.4" text-anchor="middle" textLength="20.08" lengthAdjust="spacingAndGlyphs" fill="#dcdcdc">63.70</text>
<text x="441.40" y="396.60" font-size="8.4" text-anchor="middle" textLength="16.05" lengthAdjust="spacingAndGlyphs" fill="#dcdcdc">NaN</text>
<text x="508.15" y="396.60" font-size="8.4" text-anchor="middle" textLength="20.08" lengthAdjust="spacingAndGlyphs" fill="#dcdcdc">73.00</text>
<text x="571.15" y="396.60" font-size="8.4" text-anchor="middle" textLength="15.61" lengthAdjust="spacingAndGlyphs" fill="#dcdcdc">9.30</text>
<text x="622.90" y="396.60" font-size="8.4" text-anchor="middle" textLength="17.83" lengthAdjust="spacingAndGlyphs" fill="#dcdcdc">Pass</text>
</svg>
<div style="position:absolute;left:154px;top:323px;width:503px;height:77px;border:4px solid #fa8021;border-radius:12px;"></div>
</body></html>
